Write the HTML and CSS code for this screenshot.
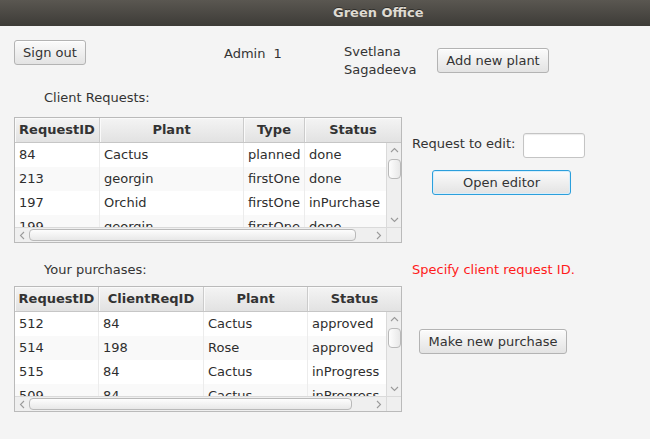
FILE: index.html
```html
<!DOCTYPE html>
<html>
<head>
<meta charset="utf-8">
<link rel="stylesheet" href="styles.css">
</head>
<body>
<div class="titlebar">Green Office</div>
<div class="content">
  <div class="top">
    <div class="cell"><div class="btn signout">Sign out</div></div>
    <div class="cell admin"><span>Admin</span><span class="num">1</span></div>
    <div class="cell name">Svetlana<br>Sagadeeva</div>
    <div class="cell"><div class="btn addplant">Add new plant</div></div>
  </div>

  <div class="label section-label">Client Requests:</div>

  <div class="section first">
    <div class="table t1">
      <div class="thead">
        <div class="th">RequestID</div><div class="th">Plant</div><div class="th">Type</div><div class="th">Status</div>
      </div>
      <div class="viewport">
        <div class="tr"><div class="td">84</div><div class="td">Cactus</div><div class="td">planned</div><div class="td">done</div></div>
        <div class="tr alt"><div class="td">213</div><div class="td">georgin</div><div class="td">firstOne</div><div class="td">done</div></div>
        <div class="tr"><div class="td">197</div><div class="td">Orchid</div><div class="td">firstOne</div><div class="td">inPurchase</div></div>
        <div class="tr alt"><div class="td">199</div><div class="td">georgin</div><div class="td">firstOne</div><div class="td">done</div></div>
      </div>
      <div class="vscroll">
        <div class="arrow"><svg width="9" height="6" viewBox="0 0 9 6"><polyline points="1,5 4.5,1.5 8,5" /></svg></div>
        <div class="vthumb"></div>
        <div class="spacer"></div>
        <div class="arrow"><svg width="9" height="6" viewBox="0 0 9 6"><polyline points="1,1 4.5,4.5 8,1" /></svg></div>
      </div>
      <div class="hscroll">
        <div class="harrow"><svg width="6" height="9" viewBox="0 0 6 9"><polyline points="5,1 1.5,4.5 5,8" /></svg></div>
        <div class="hthumb t1thumb"></div>
        <div class="spacer"></div>
        <div class="harrow"><svg width="6" height="9" viewBox="0 0 6 9"><polyline points="1,1 4.5,4.5 1,8" /></svg></div>
      </div>
      <div class="corner"></div>
    </div>
    <div class="side side1">
      <div class="edit-row">
        <div class="label edit-label">Request to edit:</div>
        <div class="textfield"></div>
      </div>
      <div class="btn focused openeditor">Open editor</div>
    </div>
  </div>

  <div class="labels-row">
    <div class="label purchases-label">Your purchases:</div>
    <div class="label error">Specify client request ID.</div>
  </div>

  <div class="section second">
    <div class="table t2">
      <div class="thead">
        <div class="th">RequestID</div><div class="th">ClientReqID</div><div class="th">Plant</div><div class="th">Status</div>
      </div>
      <div class="viewport">
        <div class="tr"><div class="td">512</div><div class="td">84</div><div class="td">Cactus</div><div class="td">approved</div></div>
        <div class="tr alt"><div class="td">514</div><div class="td">198</div><div class="td">Rose</div><div class="td">approved</div></div>
        <div class="tr"><div class="td">515</div><div class="td">84</div><div class="td">Cactus</div><div class="td">inProgress</div></div>
        <div class="tr alt"><div class="td">509</div><div class="td">84</div><div class="td">Cactus</div><div class="td">inProgress</div></div>
      </div>
      <div class="vscroll">
        <div class="arrow"><svg width="9" height="6" viewBox="0 0 9 6"><polyline points="1,5 4.5,1.5 8,5" /></svg></div>
        <div class="vthumb"></div>
        <div class="spacer"></div>
        <div class="arrow"><svg width="9" height="6" viewBox="0 0 9 6"><polyline points="1,1 4.5,4.5 8,1" /></svg></div>
      </div>
      <div class="hscroll">
        <div class="harrow"><svg width="6" height="9" viewBox="0 0 6 9"><polyline points="5,1 1.5,4.5 5,8" /></svg></div>
        <div class="hthumb t2thumb"></div>
        <div class="spacer"></div>
        <div class="harrow"><svg width="6" height="9" viewBox="0 0 6 9"><polyline points="1,1 4.5,4.5 1,8" /></svg></div>
      </div>
      <div class="corner"></div>
    </div>
    <div class="side side2">
      <div class="btn purchase">Make new purchase</div>
    </div>
  </div>
</div>
</body>
</html>
```
FILE: styles.css
```css
* { box-sizing: border-box; }
html, body { margin: 0; padding: 0; }
body {
  width: 650px;
  height: 439px;
  overflow: hidden;
  background: #f4f4f4;
  font-family: "DejaVu Sans", sans-serif;
  font-size: 13px;
  color: #333333;
}
.titlebar {
  height: 26px;
  background: linear-gradient(#5a5751, #3d3b37);
  color: #dfdbd2;
  font-weight: bold;
  font-size: 13px;
  line-height: 26px;
  padding-left: 333px;
  text-shadow: 0 -1px 0 rgba(0,0,0,0.4);
}
.content { padding-left: 14px; }

.top {
  display: grid;
  grid-template-columns: 210px 120px 93px 112px;
  margin-top: 14px;
  height: 39px;
  align-items: start;
}
.btn {
  height: 25px;
  border: 1px solid #b3b3b3;
  border-radius: 3px;
  background: linear-gradient(#fbfbfb, #e3e3e3);
  box-shadow: inset 0 1px 0 #ffffff;
  display: flex;
  align-items: center;
  justify-content: center;
  color: #333333;
  white-space: nowrap;
}
.signout { width: 72px; }
.addplant { width: 112px; margin-top: 8px; }
.admin { margin-top: 6px; line-height: 16px; display: flex; gap: 8px; }
.name { margin-top: 3px; line-height: 18px; }

.label { line-height: 16px; white-space: nowrap; }
.section-label { margin-top: 11px; margin-left: 30px; }

.section { display: flex; align-items: flex-start; }
.section.first { margin-top: 11px; }
.section.second { margin-top: 8px; }

.table {
  width: 388px;
  height: 126px;
  border: 1px solid #bababa;
  background: #ffffff;
  display: grid;
  grid-template-columns: 371px 15px;
  grid-template-rows: 25px 84px 15px;
  overflow: hidden;
}
.t1 { --cols: 85px 144px 61px 96px; }
.t2 { --cols: 84px 105px 104px 93px; }

.thead {
  grid-column: 1 / -1;
  display: grid;
  grid-template-columns: var(--cols);
  background: linear-gradient(#f4f4f4, #e2e2e2);
  border-bottom: 1px solid #c6c6c6;
}
.th {
  font-weight: bold;
  text-align: center;
  line-height: 24px;
  border-right: 1px solid #cbcbcb;
  box-shadow: inset 1px 1px 0 #fafafa;
  white-space: nowrap;
  overflow: hidden;
  color: #333333;
}
.th:last-child { border-right: none; }

.viewport { overflow: hidden; width: 371px; height: 84px; }
.tr {
  display: grid;
  grid-template-columns: var(--cols);
  width: 386px;
  height: 24px;
  background: #ffffff;
}
.tr.alt { background: #f9f9f9; }
.td {
  line-height: 24px;
  padding-left: 4px;
  border-right: 1px solid #ececec;
  white-space: nowrap;
  overflow: hidden;
  color: #2e2e2e;
}

.vscroll {
  background: #efefef;
  border-left: 1px solid #dadada;
  display: flex;
  flex-direction: column;
  align-items: center;
}
.arrow { height: 14px; display: flex; align-items: center; justify-content: center; width: 100%; }
.arrow svg, .harrow svg { fill: none; stroke: #9a9a9a; stroke-width: 1.1; }
.vthumb {
  margin-top: 2px;
  width: 13px;
  height: 20px;
  border: 1px solid #b9b9b9;
  border-radius: 4px;
  background: linear-gradient(to right, #fdfdfd, #e8e8e8);
}
.spacer { flex: 1; }

.hscroll {
  background: #efefef;
  border-top: 1px solid #dadada;
  display: flex;
  align-items: center;
}
.harrow { width: 14px; height: 100%; display: flex; align-items: center; justify-content: center; }
.hthumb {
  height: 12px;
  border: 1px solid #b9b9b9;
  border-radius: 4px;
  background: linear-gradient(#fdfdfd, #e8e8e8);
}
.t1thumb { width: 327px; }
.t2thumb { width: 323px; }
.corner { background: #efefef; border-left: 1px solid #dadada; border-top: 1px solid #dadada; }

.side1 { margin-left: 10px; }
.edit-row { display: flex; align-items: flex-start; margin-top: 16px; }
.edit-label { margin-top: 3px; }
.textfield {
  margin-left: 8px;
  width: 62px;
  height: 25px;
  background: #ffffff;
  border: 1px solid #c4c4c4;
  border-radius: 3px;
  box-shadow: inset 0 1px 1px #ececec;
}
.openeditor {
  margin-top: 12px;
  margin-left: 20px;
  width: 139px;
}
.focused {
  border: 1px solid #2b9fdc;
  box-shadow: inset 0 0 0 1px #d9eefa;
}

.labels-row {
  display: grid;
  grid-template-columns: 398px 1fr;
  margin-top: 19px;
}
.purchases-label { padding-left: 30px; }
.error { color: #ff1a1a; }

.side2 { margin-left: 17px; }
.purchase { margin-top: 43px; width: 148px; }
```
